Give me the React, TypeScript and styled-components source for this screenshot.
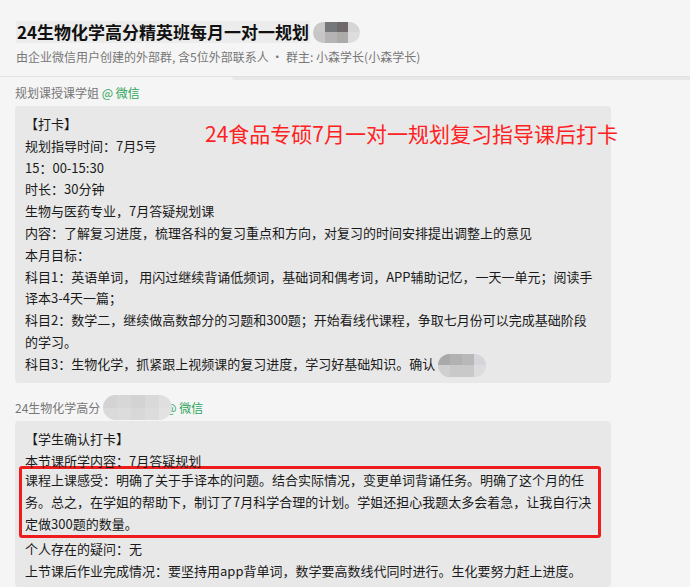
import React from "react";
import styled, { createGlobalStyle } from "styled-components";

const GlobalStyle = createGlobalStyle`
  html, body {
    margin: 0;
    padding: 0;
    background: #f5f5f5;
  }
  body {
    font-family: "Noto Sans CJK SC", "Noto Sans", "Liberation Sans", sans-serif;
    color: #1a1a1a;
  }
`;

interface iMosaic {
  cols: string[][];
  w: number;
  h: number;
}

const Mosaic: React.FC<iMosaic> = ({ cols, w, h }) => {
  return (
    <MosaicBox w={w} h={h} n={cols[0].length}>
      {cols.map((row, r) =>
        row.map((c, i) => <Cell key={`${r}-${i}`} style={{ background: c }} />)
      )}
    </MosaicBox>
  );
};

const App: React.FC = () => {
  return (
    <Page>
      <GlobalStyle />
      <Header>
        <TitleRow>
          <Title>24生物化学高分精英班每月一对一规划</Title>
          <Mosaic
            w={47}
            h={21}
            cols={[
              ["#c9c9c9", "#75787b", "#6f6969", "#d6d6d9"],
              ["#c6c6c6", "#b5b3b3", "#adaaaa", "#dddddf"],
            ]}
          />
        </TitleRow>
        <Subtitle>由企业微信用户创建的外部群, 含5位外部联系人 · 群主: 小森学长(小森学长)</Subtitle>
      </Header>
      <Divider>
        <Band />
      </Divider>

      <Messages>
        <Message>
          <Sender>
            规划课授课学姐 <Green>@ 微信</Green>
          </Sender>
          <Bubble>
            <Stamp>24食品专硕7月一对一规划复习指导课后打卡</Stamp>
            【打卡】
            <br />
            规划指导时间：7月5号
            <br />
            15：00-15:30
            <br />
            时长：30分钟
            <br />
            生物与医药专业，7月答疑规划课
            <br />
            内容：了解复习进度，梳理各科的复习重点和方向，对复习的时间安排提出调整上的意见
            <br />
            本月目标：
            <br />
            科目1：英语单词， 用闪过继续背诵低频词，基础词和偶考词，APP辅助记忆，一天一单元；阅读手
            <br />
            译本3-4天一篇；
            <br />
            科目2：数学二，继续做高数部分的习题和300题；开始看线代课程，争取七月份可以完成基础阶段
            <br />
            的学习。
            <br />
            科目3：生物化学，抓紧跟上视频课的复习进度，学习好基础知识。确认
            <Mosaic
              w={48}
              h={23}
              cols={[
                ["#a9a9a9", "#b1b1b1", "#b9b7b7", "#d6d6da"],
                ["#cfcfcf", "#c9c9c9", "#c9c9c9", "#dcdcde"],
              ]}
            />
          </Bubble>
        </Message>

        <Message>
          <Sender>
            24生物化学高分
            <Mosaic
              w={69}
              h={25}
              cols={[
                ["#d3d3d3", "#d7d7d7", "#d3d3d3", "#d9d9d9", "#dfdfdf"],
                ["#dadada", "#dcdcdc", "#d8d8d8", "#dcdcdc", "#e2e2e2"],
              ]}
            />
            <Green pull>@ 微信</Green>
          </Sender>
          <Bubble>
            【学生确认打卡】
            <br />
            本节课所学内容：7月答疑规划
            <Highlight>
              课程上课感受：明确了关于手译本的问题。结合实际情况，变更单词背诵任务。明确了这个月的任
              <br />
              务。总之，在学姐的帮助下，制订了7月科学合理的计划。学姐还担心我题太多会着急，让我自行决
              <br />
              定做300题的数量。
            </Highlight>
            个人存在的疑问：无
            <br />
            上节课后作业完成情况：要坚持用app背单词，数学要高数线代同时进行。生化要努力赶上进度。
          </Bubble>
        </Message>
      </Messages>
    </Page>
  );
};

export default App;

const Page = styled.div`
  width: 690px;
  height: 587px;
  overflow: hidden;
  background: #f5f5f5;
`;

const Header = styled.div`
  padding: 21px 0 0 16px;
  height: 55px;
`;

const TitleRow = styled.div`
  display: flex;
  align-items: center;
  height: 22px;
`;

const Title = styled.span`
  font-size: 17px;
  font-weight: bold;
  line-height: 22px;
  color: #111;
  background: #ececec;
  padding: 0 1px;
  white-space: nowrap;
`;

const Subtitle = styled.div`
  margin-top: 6px;
  font-size: 12px;
  line-height: 16px;
  color: #777;
  white-space: nowrap;
`;

const Divider = styled.div`
  height: 1px;
  background: #e2e2e2;
  display: flex;
  justify-content: flex-end;
`;

const Band = styled.div`
  width: 458px;
  height: 3px;
  margin-top: 1px;
  background: #e8e8e8;
  border-bottom-left-radius: 3px;
`;

const Messages = styled.div`
  padding: 8px 0 0 15px;
  display: flex;
  flex-direction: column;
  gap: 17px;
`;

const Message = styled.div`
  display: flex;
  flex-direction: column;
  gap: 5px;
`;

const Sender = styled.div`
  height: 16px;
  font-size: 12px;
  line-height: 16px;
  color: #777;
  display: flex;
  align-items: center;
  white-space: pre;
`;

const Green = styled.span<{ pull?: boolean }>`
  color: #2fa55a;
  margin-left: ${({ pull }) => (pull ? "-7px" : "0")};
`;

const Bubble = styled.div`
  position: relative;
  width: 596px;
  box-sizing: border-box;
  padding: 7px 10px 6px 10px;
  background: #e8e8e8;
  border-radius: 4px;
  font-size: 13px;
  line-height: 21.8px;
  color: #1a1a1a;
  white-space: nowrap;
`;

const Stamp = styled.div`
  position: absolute;
  left: 190px;
  top: 13px;
  font-size: 21px;
  line-height: 28px;
  color: #ff2222;
  white-space: nowrap;
`;

const Highlight = styled.div`
  margin: -5px 0 0 -6px;
  padding: 0 0 0 3px;
  border: 3px solid #ee1c1c;
  border-radius: 3px;
`;

const MosaicBox = styled.span<{ w: number; h: number; n: number }>`
  position: relative;
  z-index: 1;
  flex: none;
  display: inline-grid;
  grid-template-columns: repeat(${({ n }) => n}, 1fr);
  grid-template-rows: 1fr 1fr;
  width: ${({ w }) => w}px;
  height: ${({ h }) => h}px;
  border-radius: ${({ h }) => h / 2}px;
  overflow: hidden;
  vertical-align: middle;
  margin-left: 3px;
  filter: blur(0.4px);
`;

const Cell = styled.span`
  display: block;
`;
